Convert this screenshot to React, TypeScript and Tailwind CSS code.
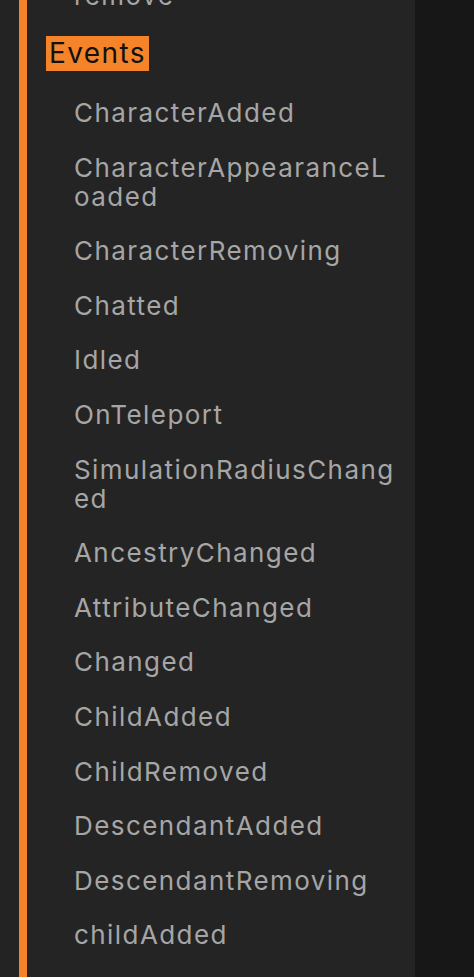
const events = [
  "CharacterAdded",
  "CharacterAppearanceLoaded",
  "CharacterRemoving",
  "Chatted",
  "Idled",
  "OnTeleport",
  "SimulationRadiusChanged",
  "AncestryChanged",
  "AttributeChanged",
  "Changed",
  "ChildAdded",
  "ChildRemoved",
  "DescendantAdded",
  "DescendantRemoving",
  "childAdded",
];

export default function App() {
  return (
    <div
      className="flex h-[977px] w-[474px] overflow-hidden bg-[#242424]"
      style={{ fontFamily: "Inter, 'Noto Sans', sans-serif" }}
    >
      <div className="w-[19px] shrink-0 bg-[#232323]" />
      <div className="w-[8px] shrink-0 bg-[#f5832a]" />

      <div className="flex w-[388px] shrink-0 flex-col bg-[#242424]">
        {/* tail of the previous section, cut off at the top */}
        <div className="-mt-[19px] pl-[47px] text-[26px] leading-[29px] tracking-[0.055em] text-[#a6a6a6]">
          remove
        </div>

        <div className="mt-[26px] pl-[19px]">
          <span className="inline-block bg-[#f5832a] px-[3px] text-[28px] leading-[35px] tracking-[0.05em] text-[#111111]">
            Events
          </span>
        </div>

        <ul className="mt-[27px] flex w-[374px] flex-col gap-[25.6px] pl-[47px]">
          {events.map((name) => (
            <li
              key={name}
              className="break-all text-[26px] leading-[29px] tracking-[0.055em] text-[#a6a6a6]"
            >
              {name}
            </li>
          ))}
        </ul>
      </div>

      <div className="flex-1 bg-[#171717]" />
    </div>
  );
}
